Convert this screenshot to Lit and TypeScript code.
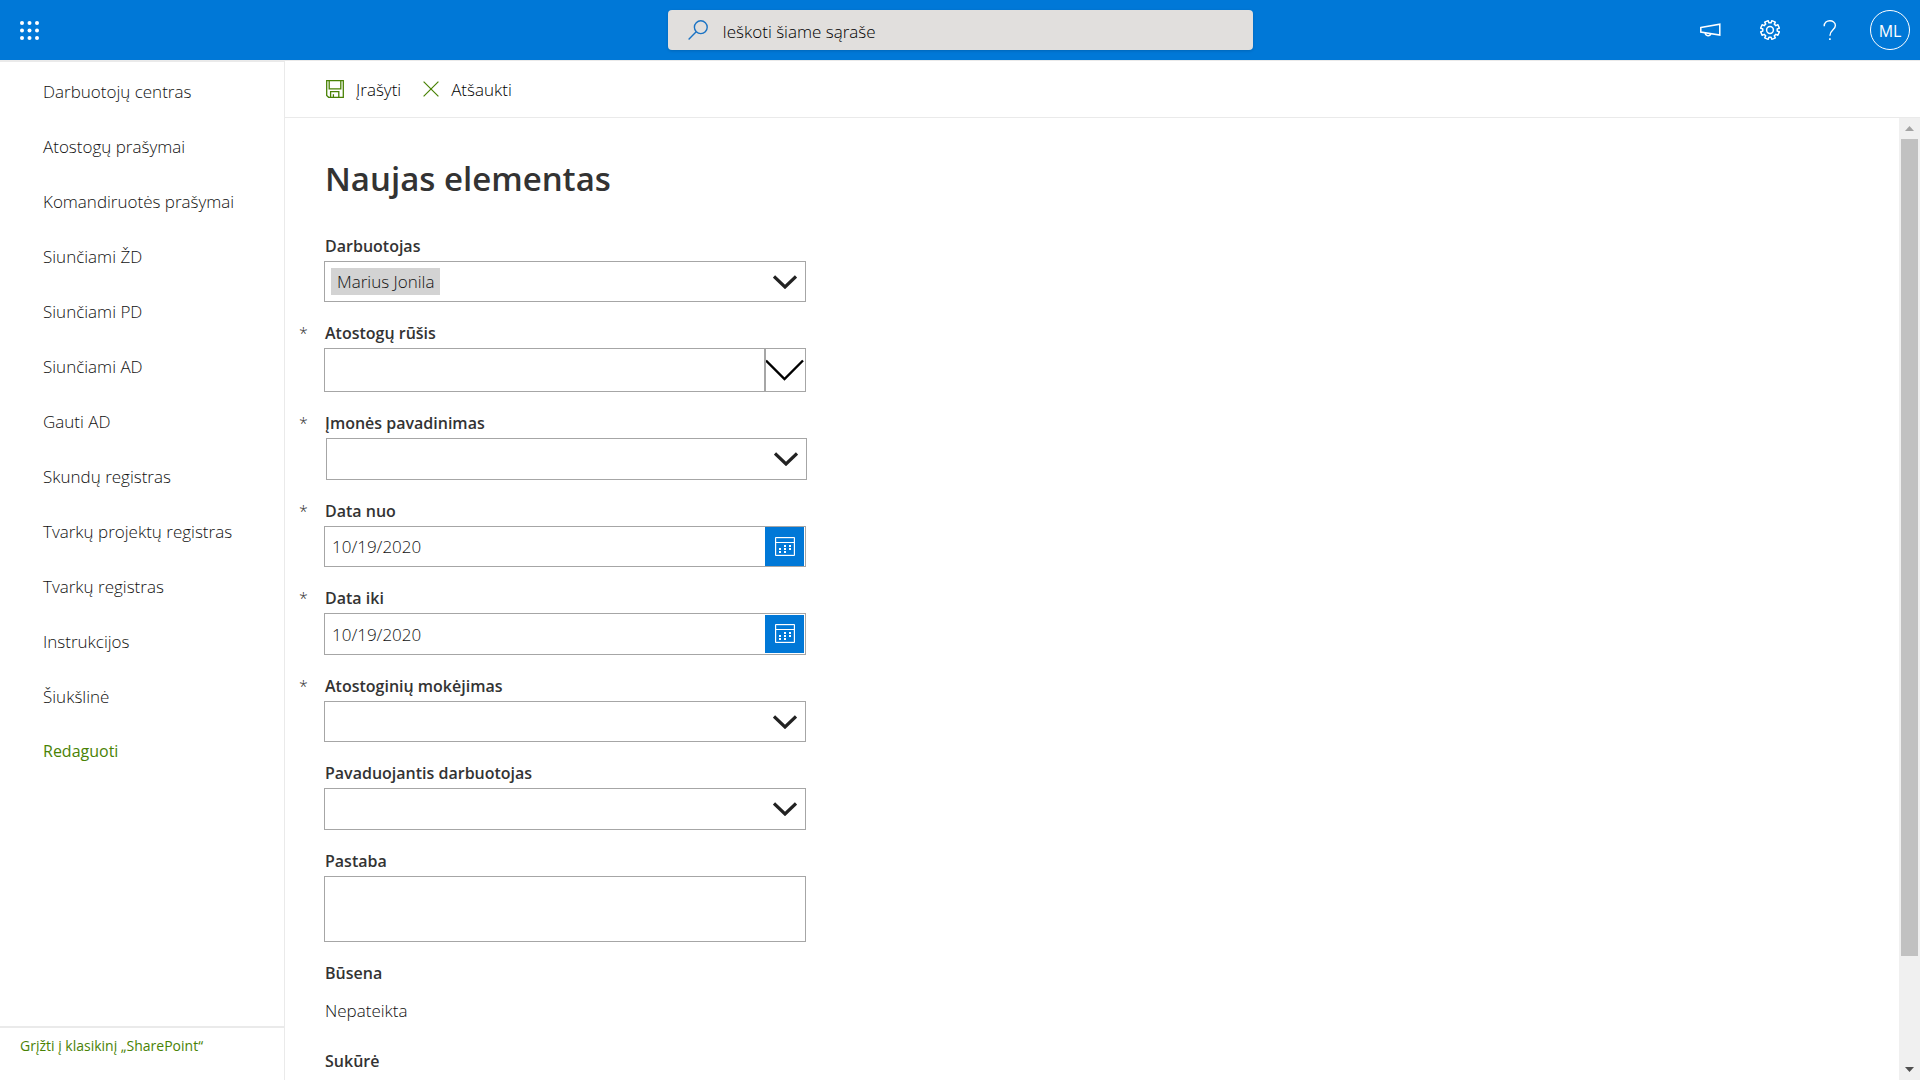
import { LitElement, html, css, svg, nothing } from "lit";
import { customElement, property } from "lit/decorators.js";
import { classMap } from "lit/directives/class-map.js";

type Kind = "person" | "combo" | "select" | "date" | "note" | "static";

interface Field {
  id: string;
  label: string;
  kind: Kind;
  required?: boolean;
  value?: string;
  size?: "short" | "regular" | "tall";
  inset?: boolean;
}

const NAV = [
  "Darbuotojų centras",
  "Atostogų prašymai",
  "Komandiruotės prašymai",
  "Siunčiami ŽD",
  "Siunčiami PD",
  "Siunčiami AD",
  "Gauti AD",
  "Skundų registras",
  "Tvarkų projektų registras",
  "Tvarkų registras",
  "Instrukcijos",
  "Šiukšlinė",
];

const FIELDS: Field[] = [
  { id: "darbuotojas", label: "Darbuotojas", kind: "person", value: "Marius Jonila", size: "short" },
  { id: "rusis", label: "Atostogų rūšis", kind: "combo", required: true, size: "tall" },
  { id: "imone", label: "Įmonės pavadinimas", kind: "select", required: true, inset: true },
  { id: "nuo", label: "Data nuo", kind: "date", required: true, value: "10/19/2020", size: "short" },
  { id: "iki", label: "Data iki", kind: "date", required: true, value: "10/19/2020" },
  { id: "mokejimas", label: "Atostoginių mokėjimas", kind: "select", required: true, size: "short" },
  { id: "pavaduojantis", label: "Pavaduojantis darbuotojas", kind: "person" },
  { id: "pastaba", label: "Pastaba", kind: "note" },
  { id: "busena", label: "Būsena", kind: "static", value: "Nepateikta" },
  { id: "sukure", label: "Sukūrė", kind: "static", value: "" },
];

const chevron = html`<svg class="chevron" width="24" height="14" viewBox="0 0 24 14" aria-hidden="true">
  <path d="M1 1.5 L12 12 L23 1.5" fill="none" stroke="#222" stroke-width="3.2" />
</svg>`;

const wideChevron = html`<svg width="39" height="22" viewBox="0 0 39 22" aria-hidden="true">
  <path d="M0 1.5 L18.5 20 L37 1.5" fill="none" stroke="#000" stroke-width="2.4" />
</svg>`;

const dayDots = [
  [10, 9], [15, 9],
  [5, 12], [10, 12], [15, 12],
  [5, 15], [10, 15],
].map(([x, y]) => svg`<rect x=${x - 1} y=${y - 1} width="2" height="2" fill="#fff"></rect>`);

const calendar = html`<svg width="20" height="20" viewBox="0 0 20 20" aria-hidden="true">
  <rect x="1" y="1" width="18" height="17" fill="none" stroke="#5fa9e6" />
  <path d="M0.5 0.5H19.5V18.5H0.5ZM0.5 5.5H19.5" fill="none" stroke="#fff" />
  ${dayDots}
</svg>`;

/** Outline of an eight-toothed cog centred in a 20×20 box. */
function gearPath(): string {
  const pts: string[] = [];
  const teeth = 8;
  for (let i = 0; i < teeth; i++) {
    const mid = (i + 0.5) * ((Math.PI * 2) / teeth);
    for (const [r, d] of [[7.3, -0.24], [9.5, -0.2], [9.5, 0.2], [7.3, 0.24]]) {
      pts.push(`${(10 + r * Math.cos(mid + d)).toFixed(2)} ${(10 + r * Math.sin(mid + d)).toFixed(2)}`);
    }
  }
  return `M${pts.join("L")}Z`;
}

@customElement("form-field")
export class FormField extends LitElement {
  @property({ attribute: false }) field!: Field;

  static styles = css`
    * { box-sizing: border-box; }
    :host { display: block; }
    .row { display: grid; grid-template-columns: 25px minmax(0, 482px); }
    .mark { font-size: 16px; line-height: 24px; color: #333; }
    .label { padding-left: 1px; font-size: 16px; line-height: 24px; font-weight: 600; color: #333; }
    .body { grid-column: 2; margin-top: 3px; }
    .box {
      display: grid;
      grid-template-columns: minmax(0, 1fr) 41px;
      height: 42px;
      border: 1px solid #a6a6a6;
      background: #fff;
    }
    .box.short { height: 41px; }
    .box.tall { height: 44px; }
    .box.inset { margin-left: 2px; margin-right: -1px; }
    .box.note { display: block; height: 66px; }
    .box.date-box { grid-template-columns: minmax(0, 1fr) 40px; }
    input, select, textarea, button {
      font: inherit;
      color: inherit;
      border: 0;
      border-radius: 0;
      margin: 0;
      padding: 0;
      background: transparent;
      outline: none;
      min-width: 0;
      appearance: none;
    }
    select { grid-row: 1; grid-column: 1 / -1; padding: 0 8px; }
    .icon {
      grid-row: 1;
      grid-column: 2;
      display: flex;
      align-items: center;
      justify-content: center;
      pointer-events: none;
    }
    .split { border-left: 2px solid #a6a6a6; }
    button { display: flex; align-items: center; justify-content: center; cursor: pointer; }
    .picker { display: flex; align-items: center; padding-left: 6px; }
    .chip { padding: 0 6px; background: #d3d3d3; line-height: 27px; white-space: nowrap; }
    .picker input { flex: 1; height: 100%; }
    .date { padding-left: 7px; }
    .day { margin-right: 1px; background: #0078d7; }
    .box.regular .day { margin-top: 1px; margin-bottom: 1px; }
    textarea { display: block; width: 100%; height: 100%; padding: 8px; resize: none; }
    .value { padding: 11px 1px 0; line-height: 24px; }
    .text { font-size: 17px; font-weight: 300; color: #111; }
  `;

  private control(f: Field) {
    const size = f.size ?? "regular";
    const box = classMap({
      box: true,
      text: true,
      [size]: true,
      inset: !!f.inset,
      note: f.kind === "note",
      "date-box": f.kind === "date",
    });
    switch (f.kind) {
      case "person":
        return html`<div class=${box}>
          <div class="picker">
            ${f.value ? html`<span class="chip">${f.value}</span>` : nothing}
            <input id=${f.id} type="text" />
          </div>
          <button type="button" aria-label=${f.label}>${chevron}</button>
        </div>`;
      case "combo":
        return html`<div class=${box}>
          <select id=${f.id}><option></option></select>
          <span class="icon split">${wideChevron}</span>
        </div>`;
      case "select":
        return html`<div class=${box}>
          <select id=${f.id}><option></option></select>
          <span class="icon">${chevron}</span>
        </div>`;
      case "date":
        return html`<div class=${box}>
          <input class="date" id=${f.id} type="text" .value=${f.value ?? ""} />
          <button class="day" type="button" aria-label=${f.label}>${calendar}</button>
        </div>`;
      case "note":
        return html`<div class=${box}><textarea id=${f.id}></textarea></div>`;
      default:
        return html`<div class="value text">${f.value}</div>`;
    }
  }

  render() {
    const f = this.field;
    return html`<div class="row">
      <span class="mark">${f.required ? "*" : nothing}</span>
      ${f.kind === "static"
        ? html`<span class="label">${f.label}</span>`
        : html`<label class="label" for=${f.id}>${f.label}</label>`}
      <div class="body">${this.control(f)}</div>
    </div>`;
  }
}

@customElement("app-root")
export class AppRoot extends LitElement {
  static styles = css`
    * { box-sizing: border-box; }
    :host {
      display: flex;
      flex-direction: column;
      height: 100vh;
      overflow: hidden;
      background: #fff;
      color: #111;
      font-family: "Open Sans", "Noto Sans", sans-serif;
      font-size: 17px;
      font-weight: 300;
    }
    button { font: inherit; color: inherit; border: 0; padding: 0; background: none; cursor: pointer; }
    a { text-decoration: none; color: inherit; }
    svg { display: block; flex: none; }

    .top {
      display: grid;
      grid-template-columns: 1fr minmax(0, 585px) 1fr;
      align-items: center;
      flex: none;
      height: 60px;
      background: #0078d7;
      color: #fff;
    }
    .waffle { display: flex; align-items: center; justify-content: center; width: 59px; height: 59px; }
    .search {
      display: flex;
      align-items: center;
      gap: 15px;
      height: 40px;
      padding: 0 20px;
      border-radius: 4px;
      background: #e1dfdd;
      box-shadow: 0 1px 3px rgba(0, 0, 0, 0.15);
    }
    .search input {
      flex: 1;
      min-width: 0;
      border: 0;
      padding: 2px 0 0;
      outline: none;
      background: transparent;
      font: inherit;
      color: #000;
    }
    .search input::placeholder { color: #000; opacity: 1; }
    .tools { display: flex; justify-content: flex-end; }
    .tool { display: flex; align-items: center; justify-content: center; width: 60px; height: 60px; }
    .avatar {
      display: flex;
      align-items: center;
      justify-content: center;
      width: 40px;
      height: 40px;
      padding-top: 2px;
      border: 1px solid #fff;
      border-radius: 50%;
      font-size: 16px;
      font-weight: 400;
    }

    .page { display: flex; flex: 1; min-height: 0; }
    .side {
      display: flex;
      flex-direction: column;
      flex: none;
      width: 285px;
      border-top: 2px solid #eaeaea;
      border-right: 1px solid #eaeaea;
    }
    .nav { flex: 1; margin: 0; padding: 2px 0 0; list-style: none; }
    .nav a { display: block; padding-left: 43px; line-height: 55px; white-space: nowrap; }
    .nav .edit { color: #498205; font-weight: 400; font-size: 16px; }
    .classic {
      height: 54px;
      padding-left: 20px;
      border-top: 2px solid #eaeaea;
      color: #498205;
      font-size: 14px;
      line-height: 36px;
      font-weight: 400;
      white-space: nowrap;
    }

    .main { display: flex; flex-direction: column; flex: 1; min-width: 0; }
    .commands {
      display: flex;
      align-items: center;
      gap: 22px;
      flex: none;
      height: 58px;
      padding-left: 41px;
      border-top: 1px solid #eaeaea;
      border-bottom: 1px solid #eaeaea;
    }
    .commands button { display: flex; align-items: center; gap: 12px; color: #000; }
    .scroller { display: flex; flex: 1; min-height: 0; }
    .form { flex: 1; min-width: 0; overflow: hidden; padding: 37px 14px 0; }
    h1 {
      margin: 0 0 31px;
      padding-left: 26px;
      font-size: 33px;
      line-height: 48px;
      font-weight: 600;
      color: #333;
    }
    .fields { display: flex; flex-direction: column; gap: 19px; }
    .fields form-field:nth-child(9) { margin-bottom: 7px; }

    .bar { display: flex; flex-direction: column; flex: none; width: 21px; background: #f0f0f0; }
    .bar button { display: flex; align-items: center; justify-content: center; flex: none; height: 21px; }
    .track { flex: 1; display: grid; grid-template-rows: 817fr 103fr; padding: 0 2px; }
    .thumb { background: #c1c1c1; }
  `;

  render() {
    return html`
      <header class="top">
        <button class="waffle" type="button" aria-label="Programos">
          <svg width="19" height="19" viewBox="0 0 19 19" fill="#fff">
            ${[2, 9.5, 17].map((y) => [2, 9.5, 17].map((x) => svg`<circle cx=${x} cy=${y} r="2"></circle>`))}
          </svg>
        </button>
        <label class="search">
          <svg width="20" height="20" viewBox="0 0 20 20" fill="none" stroke="#1a73c4" stroke-width="1.4">
            <circle cx="12.8" cy="7.2" r="6.4" />
            <path d="M8.2 11.8 L0.6 19.4" />
          </svg>
          <input type="text" placeholder="Ieškoti šiame sąraše" />
        </label>
        <div class="tools">
          <button class="tool" type="button" aria-label="Naujienos">
            <svg width="22" height="14" viewBox="0 0 22 14" fill="none" stroke="#fff" stroke-width="1.5">
              <path d="M1.8 4.6 L20.8 1.2 V12 L1.8 9 Z" />
              <path d="M6.2 9.8 C6.4 13.4 11.2 13.6 11.8 10.6" />
            </svg>
          </button>
          <button class="tool" type="button" aria-label="Parametrai">
            <svg width="20" height="20" viewBox="0 0 20 20" fill="none" stroke="#fff" stroke-width="1.5" stroke-linejoin="round">
              <path d=${gearPath()} />
              <circle cx="10" cy="10" r="3.4" />
            </svg>
          </button>
          <button class="tool" type="button" aria-label="Žinynas">
            <svg width="14" height="20" viewBox="0 0 14 20" fill="none" stroke="#fff" stroke-width="1.4">
              <path d="M1.2 6.2 C1.2 -1.2 12.4 -0.8 12.4 5.6 C12.4 10 6.9 9.8 6.9 15.8" />
              <path d="M6.9 18.2 V20" stroke-width="1.6" />
            </svg>
          </button>
          <button class="tool" type="button"><span class="avatar">ML</span></button>
        </div>
      </header>
      <div class="page">
        <aside class="side">
          <ul class="nav">
            ${NAV.map((n) => html`<li><a href="#">${n}</a></li>`)}
            <li><a class="edit" href="#">Redaguoti</a></li>
          </ul>
          <a class="classic" href="#">Grįžti į klasikinį „SharePoint“</a>
        </aside>
        <main class="main">
          <div class="commands">
            <button type="button">
              <svg width="18" height="18" viewBox="0 0 18 18" fill="none" stroke="#498205" stroke-width="1.3">
                <path d="M0.7 0.7 H17.3 V17.3 H2.6 L0.7 15.4 Z" />
                <path d="M3.2 0.7 V8.8 H14.8 V0.7" />
                <path d="M4.6 17 V11.6 H12.8 V17" />
                <path d="M7.4 17 V14.2" />
              </svg>
              Įrašyti
            </button>
            <button type="button">
              <svg width="16" height="16" viewBox="0 0 16 16" fill="none" stroke="#498205" stroke-width="1.2">
                <path d="M0.6 0.6 L15.4 15.4 M15.4 0.6 L0.6 15.4" />
              </svg>
              Atšaukti
            </button>
          </div>
          <div class="scroller">
            <form class="form">
              <h1>Naujas elementas</h1>
              <div class="fields">${FIELDS.map((f) => html`<form-field .field=${f}></form-field>`)}</div>
            </form>
            <div class="bar">
              <button type="button" aria-label="Aukštyn">
                <svg width="9" height="5" viewBox="0 0 9 5"><path d="M4.5 0 L9 5 H0 Z" fill="#a3a3a3" /></svg>
              </button>
              <div class="track"><div class="thumb"></div></div>
              <button type="button" aria-label="Žemyn">
                <svg width="9" height="5" viewBox="0 0 9 5"><path d="M4.5 5 L9 0 H0 Z" fill="#505050" /></svg>
              </button>
            </div>
          </div>
        </main>
      </div>
    `;
  }
}
